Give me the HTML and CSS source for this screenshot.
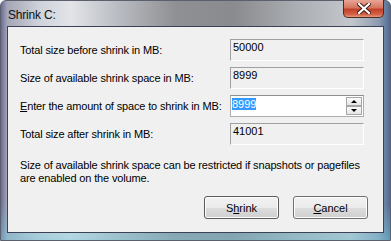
FILE: index.html
```html
<!DOCTYPE html>
<html lang="en">
<head>
  <meta charset="UTF-8">
  <title>Shrink C:</title>
  <link rel="stylesheet" href="styles.css">
</head>
<body>
  <div class="window">
    <div class="titlebar">
      <span class="title">Shrink C:</span>
      <div class="close">
        <svg width="14" height="11" viewBox="0 0 14 11">
          <path d="M2 1 L12 10 M12 1 L2 10" stroke="#3a1810" stroke-width="4" stroke-linecap="square"/>
          <path d="M2 1 L12 10 M12 1 L2 10" stroke="#fff" stroke-width="2.2" stroke-linecap="square"/>
        </svg>
      </div>
    </div>
    <div class="client">
      <div class="fields">
        <label>Total size before shrink in MB:</label>
        <div class="static">50000</div>
        <label>Size of available shrink space in MB:</label>
        <div class="static">8999</div>
        <label><u>E</u>nter the amount of space to shrink in MB:</label>
        <div class="spin">
          <span class="value"><span class="selected">8999</span></span>
          <div class="arrows">
            <div class="arrow up"></div>
            <div class="arrow down"></div>
          </div>
        </div>
        <label>Total size after shrink in MB:</label>
        <div class="static">41001</div>
      </div>
      <p class="note">Size of available shrink space can be restricted if snapshots or pagefiles are enabled on the volume.</p>
      <div class="actions">
        <button class="default">S<u>h</u>rink</button>
        <button><u>C</u>ancel</button>
      </div>
    </div>
  </div>
</body>
</html>
```

FILE: styles.css
```css
* {
  box-sizing: border-box;
}

body {
  margin: 0;
  width: 391px;
  height: 241px;
  overflow: hidden;
  font-family: "Liberation Sans", Arial, sans-serif;
  font-size: 11px;
  color: #000;
  background: #fff;
}

.window {
  width: 391px;
  height: 241px;
  display: flex;
  flex-direction: column;
  padding: 0 6px 7px 6px;
  border: 1px solid #5a606c;
  border-radius: 6px 6px 0 0;
  background:
    linear-gradient(to bottom, rgba(255,255,255,0) 85%, rgba(120,200,220,.5) 100%),
    linear-gradient(to right, #6c6a9c 0, #a4a6b4 6px, #cfd3da 10%, #e2e4e8 18%, #b9bcc2 30%, #8f9093 45%, #8a8b8e 60%, #a9acb1 75%, #c3c7cc 90%, #8e9cb0 97%, #4f6c96 100%);
}

.titlebar {
  height: 25px;
  display: flex;
  align-items: flex-start;

  .title {
    padding: 7px 0 0 1px;
    font-size: 12px;
    line-height: 14px;
    letter-spacing: -0.2px;
    color: #111;
  }

  .close {
    margin-left: auto;
    margin-top: -1px;
    width: 41px;
    height: 18px;
    display: flex;
    align-items: center;
    justify-content: center;
    border: 1px solid #4e2a24;
    border-top: none;
    border-radius: 0 0 5px 5px;
    background: linear-gradient(to bottom, #e7a596 0%, #d5765f 45%, #c2402a 55%, #d46248 85%, #e49a80 100%);
  }
}

.client {
  flex: 1;
  display: flex;
  flex-direction: column;
  padding: 12px 15px 13px 12px;
  background: #f0f0f0;
  border: 1px solid #3b4257;
}

.fields {
  display: grid;
  grid-template-columns: 1fr 134px;
  grid-auto-rows: 22px;
  row-gap: 6px;
  margin-right: 4px;

  label {
    padding-top: 5px;
    line-height: 13px;
    letter-spacing: -0.15px;
    white-space: nowrap;
  }
}

.static {
  padding: 1px 2px 0;
  line-height: 13px;
  border-top: 1px solid #a0a0a0;
  border-left: 1px solid #a0a0a0;
  border-right: 1px solid #fff;
  border-bottom: 1px solid #fff;
}

.spin {
  display: flex;
  background: #fff;
  border: 1px solid #abadb3;
  border-top-color: #8e8f8f;

  .value {
    flex: 1;
    padding: 2px 0 0 1px;
    line-height: 13px;
  }

  .selected {
    background: #3399ff;
    color: #fff;
  }

  .arrows {
    width: 17px;
    display: flex;
    flex-direction: column;
    padding: 1px 1px 1px 0;
    gap: 0;
  }

  .arrow {
    flex: 1;
    display: flex;
    align-items: center;
    justify-content: center;
    border: 1px solid #a7a7a7;
    background: linear-gradient(to bottom, #fafafa, #e6e6e6);
  }

  .arrow::before {
    content: "";
    border-left: 3px solid transparent;
    border-right: 3px solid transparent;
  }

  .up::before {
    border-bottom: 3px solid #000;
  }

  .down::before {
    border-top: 3px solid #000;
  }
}

.note {
  margin: 14px 0 0;
  line-height: 13px;
  letter-spacing: -0.15px;
}

.actions {
  display: flex;
  justify-content: flex-end;
  gap: 14px;
  margin-top: auto;

  button {
    width: 75px;
    height: 23px;
    padding: 0;
    font-family: inherit;
    font-size: 11px;
    color: #000;
    border: 1px solid #707070;
    border-radius: 3px;
    box-shadow: inset 0 0 0 1px #fcfcfc;
    background: linear-gradient(to bottom, #f2f2f2 0%, #ebebeb 50%, #dddddd 51%, #cfcfcf 100%);
  }

  .default {
    border-color: #5b5b5b;
  }
}
```
